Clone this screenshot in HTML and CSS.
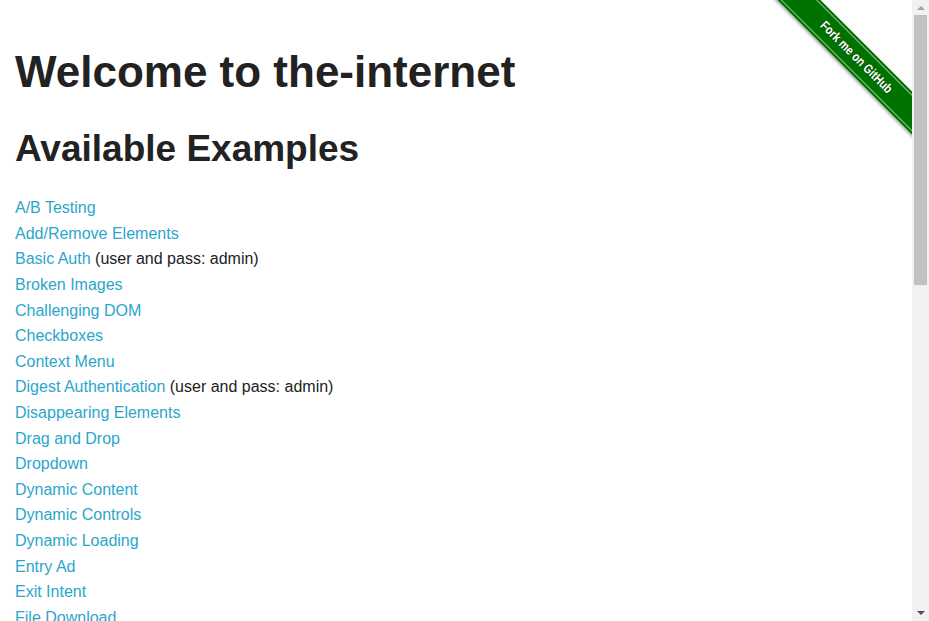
FILE: index.html
```html
<!DOCTYPE html>
<html lang="en">
<head>
<meta charset="utf-8">
<title>The Internet</title>
<link rel="stylesheet" href="styles.css">
</head>
<body>
<div class="page">
  <main class="content">
    <a class="ribbon" href="#"><span class="band"><span class="label">Fork me on GitHub</span></span></a>
    <h1 class="title">Welcome to the-internet</h1>
    <h2 class="subtitle">Available Examples</h2>
    <ul class="examples">
      <li><a href="#">A/B Testing</a></li>
      <li><a href="#">Add/Remove Elements</a></li>
      <li><a href="#">Basic Auth</a> (user and pass: admin)</li>
      <li><a href="#">Broken Images</a></li>
      <li><a href="#">Challenging DOM</a></li>
      <li><a href="#">Checkboxes</a></li>
      <li><a href="#">Context Menu</a></li>
      <li><a href="#">Digest Authentication</a> (user and pass: admin)</li>
      <li><a href="#">Disappearing Elements</a></li>
      <li><a href="#">Drag and Drop</a></li>
      <li><a href="#">Dropdown</a></li>
      <li><a href="#">Dynamic Content</a></li>
      <li><a href="#">Dynamic Controls</a></li>
      <li><a href="#">Dynamic Loading</a></li>
      <li><a href="#">Entry Ad</a></li>
      <li><a href="#">Exit Intent</a></li>
      <li><a href="#">File Download</a></li>
      <li><a href="#">File Upload</a></li>
      <li><a href="#">Floating Menu</a></li>
      <li><a href="#">Forgot Password</a></li>
    </ul>
  </main>
  <div class="scrollbar" aria-hidden="true">
    <span class="arrow up"></span>
    <div class="track"><div class="thumb"></div></div>
    <span class="arrow down"></span>
  </div>
</div>
</body>
</html>
```
FILE: styles.css
```css
html, body {
  margin: 0;
  padding: 0;
  background: #fff;
}
body {
  font-family: "Liberation Sans", Arial, Helvetica, sans-serif;
  color: #222;
  font-size: 16px;
}
.page {
  display: flex;
  height: 100vh;
  overflow: hidden;
}
.content {
  flex: 1;
  position: relative;
  overflow: hidden;
  padding: 0 15px;
}
.title {
  font-size: 44px;
  font-weight: bold;
  line-height: 1.2;
  margin: 46px 0 0;
}
.subtitle {
  font-size: 37px;
  font-weight: bold;
  line-height: 1.2;
  margin: 28px 0 0;
}
.examples {
  list-style: none;
  margin: 24px 0 0;
  padding: 0;
}
.examples li {
  line-height: 25.6px;
}
.examples a {
  color: #2ba6cb;
  text-decoration: none;
}
.ribbon {
  position: absolute;
  top: 0;
  right: 0;
  width: 149px;
  height: 149px;
  overflow: hidden;
  text-decoration: none;
}
.band {
  position: absolute;
  left: -27px;
  top: 42px;
  width: 240px;
  height: 30px;
  box-sizing: border-box;
  transform: rotate(45deg);
  background: #007200;
  border-top: 2px solid #007200;
  border-bottom: 2px solid #007200;
  outline: 1px solid rgba(255,255,255,0.55);
  outline-offset: -3px;
  box-shadow: 0 2px 3px rgba(0,0,0,0.35);
  color: #fff;
  font-family: "Liberation Sans", sans-serif;
  font-weight: bold;
  font-size: 13px;
  line-height: 26px;
  text-align: center;
  text-shadow: 0 0 2px rgba(0,0,0,0.6);
}
.label {
  display: inline-block;
  transform: scaleX(0.82);
}
.scrollbar {
  width: 17px;
  flex: none;
  background: #f1f1f1;
  display: flex;
  flex-direction: column;
  align-items: center;
}
.arrow {
  flex: none;
  width: 0;
  height: 0;
  border-left: 4px solid transparent;
  border-right: 4px solid transparent;
}
.arrow.up {
  margin: 6px 0 5px;
  border-bottom: 4px solid #a3a3a3;
}
.arrow.down {
  margin: 5px 0 6px;
  border-top: 4px solid #505050;
}
.track {
  flex: 1;
  width: 100%;
  display: flex;
  justify-content: center;
}
.thumb {
  width: 13px;
  height: 270px;
  background: #c1c1c1;
}
```
